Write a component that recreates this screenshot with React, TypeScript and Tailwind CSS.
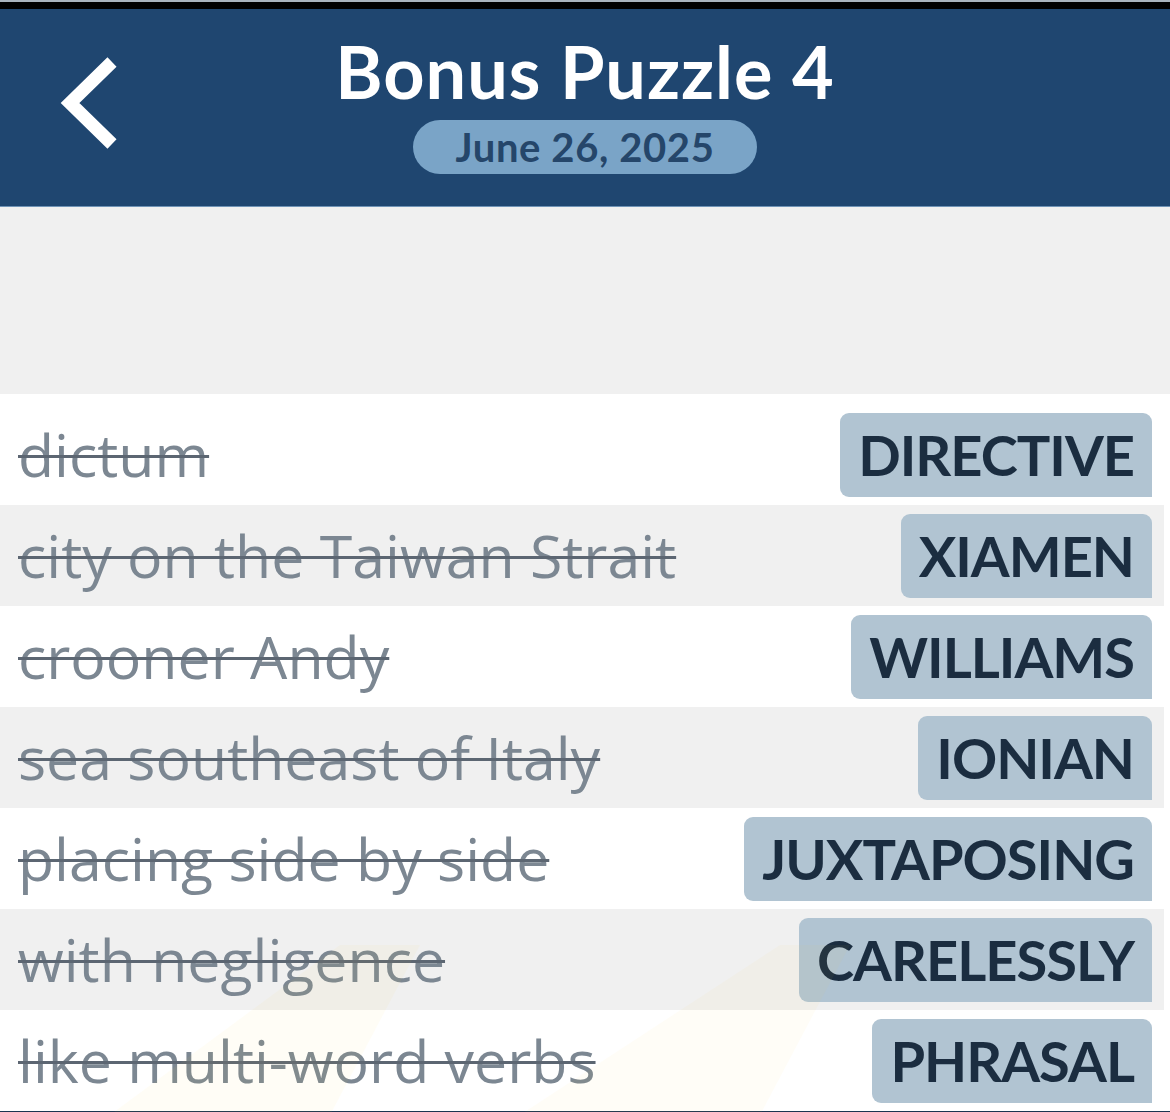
import React from 'react'

interface clue {
    text: string,
    answer: string
}

const clues: clue[] = [
    { text: 'dictum', answer: 'DIRECTIVE' },
    { text: 'city on the Taiwan Strait', answer: 'XIAMEN' },
    { text: 'crooner Andy', answer: 'WILLIAMS' },
    { text: 'sea southeast of Italy', answer: 'IONIAN' },
    { text: 'placing side by side', answer: 'JUXTAPOSING' },
    { text: 'with negligence', answer: 'CARELESSLY' },
    { text: 'like multi-word verbs', answer: 'PHRASAL' },
]

const BackChevron = () => (
    <svg width="64" height="96" viewBox="0 0 64 96" fill="none">
        <polyline points="52,6 10,47 52,88" stroke="white" strokeWidth="13" strokeLinejoin="miter" strokeLinecap="butt" />
    </svg>
)

const App = () => {
    return (
        <div className="w-[1170px] h-[1112px] overflow-hidden bg-white relative" style={{ fontFamily: 'Lato, "Open Sans", sans-serif' }}>
            <div className="h-[2px] bg-[#a9b3bd]"></div>
            <div className="h-[7px] bg-black"></div>

            {/* header */}
            <header className="h-[198px] bg-[#1f4670] border-b border-[#6f93b6] grid grid-cols-[1fr_auto_1fr]">
                <div className="flex items-start pl-[60px] pt-[47px]">
                    <button><BackChevron /></button>
                </div>
                <div className="flex flex-col items-center pt-[20px]">
                    <h1 className="text-white font-bold text-[72px] leading-[84px] tracking-[1px]">Bonus Puzzle 4</h1>
                    <div className="mt-[7px] h-[54px] w-[344px] rounded-full bg-[#7aa4c7] flex items-center justify-center">
                        <span className="text-[#25466a] font-bold text-[40px] leading-none tracking-[0.6px]">June 26, 2025</span>
                    </div>
                </div>
                <div></div>
            </header>

            <div className="h-[187px] bg-[#f0f0f0]"></div>

            {/* clue list */}
            <div className="pt-[10px] relative">
                {clues.map((c, index) => (
                    <div key={index} className={`h-[101px] mr-[6px] flex items-center justify-between pl-[18px] ${index % 2 == 1 ? 'bg-[#f0f0f0]' : 'bg-white'}`}>
                        <span className="text-[#7c8792] text-[59px] leading-none line-through decoration-[#5c6672] decoration-[3px] whitespace-nowrap" style={{ fontFamily: '"Open Sans", sans-serif' }}>{c.text}</span>
                        <div className="h-[84px] mr-[12px] px-[18px] flex items-center bg-[#b1c4d2] rounded-[9px] rounded-br-none">
                            <span className="text-[#1b2d40] font-bold text-[56px] leading-none tracking-[-1px]">{c.answer}</span>
                        </div>
                    </div>
                ))}

                {/* faint rays */}
                <svg className="absolute left-0 bottom-0 pointer-events-none" width="1170" height="200" viewBox="0 0 1170 200">
                    <polygon points="110,200 330,200 420,30 340,30" fill="#ffd84a" opacity="0.05" />
                    <polygon points="520,200 760,200 850,30 780,30" fill="#ffd84a" opacity="0.045" />
                </svg>
                <div className="h-[4px] bg-[#1c3550]"></div>
            </div>
        </div>
    )
}

export default App
